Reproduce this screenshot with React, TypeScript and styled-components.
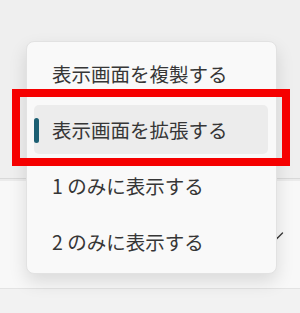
import styled, { createGlobalStyle } from "styled-components";

const GlobalStyle = createGlobalStyle`
  html, body {
    margin: 0;
    padding: 0;
    background: #efefef;
  }
  #root {
    width: 300px;
    height: 313px;
  }
`;

const items = [
  { label: "表示画面を複製する", selected: false },
  { label: "表示画面を拡張する", selected: true },
  { label: "1 のみに表示する", selected: false },
  { label: "2 のみに表示する", selected: false },
];

const App = () => {
  return (
    <Page>
      <GlobalStyle />
      <TopArea />
      <SettingsRow />
      <BottomArea />

      <Chevron width="14" height="10" viewBox="0 0 14 10">
        <polyline points="1.5,2 7,7.5 12.5,2" />
      </Chevron>

      <Menu>
        {items.map((item) => (
          <MenuItem key={item.label} $selected={item.selected}>
            {item.label}
          </MenuItem>
        ))}
      </Menu>

      {/* 注釈の赤枠 */}
      <Highlight />
    </Page>
  );
};

const Page = styled.div`
  position: relative;
  width: 300px;
  height: 313px;
  overflow: hidden;
  display: flex;
  flex-direction: column;
  font-family: "Noto Sans CJK JP", "Noto Sans", sans-serif;
`;

// 背景
const TopArea = styled.div`
  height: 178px;
  flex-shrink: 0;
  background: #efefef;
  border-bottom: 1px solid #d9d9d9;
`;

const SettingsRow = styled.div`
  height: 107px;
  flex-shrink: 0;
  background: #f8f8f8;
  border-top: 2px solid #ebebeb;
  border-bottom: 1px solid #e3e3e3;
`;

const BottomArea = styled.div`
  flex: 1;
  background: #f2f2f2;
`;

const Chevron = styled.svg`
  position: absolute;
  left: 270px;
  top: 231px;
  fill: none;
  stroke: #3a3a3a;
  stroke-width: 1.4;
  stroke-linecap: round;
  stroke-linejoin: round;
`;

// メニュー
const Menu = styled.div`
  position: absolute;
  left: 26px;
  top: 41px;
  width: 251px;
  box-sizing: border-box;
  display: flex;
  flex-direction: column;
  gap: 7px;
  padding: 7px 8px 7px 7px;
  background: #f9f9f9;
  border: 1px solid #e2e2e2;
  border-radius: 8px;
  box-shadow: 0 8px 18px rgba(0, 0, 0, 0.12);
`;

interface MenuItemProps {
  $selected: boolean;
}

const MenuItem = styled.div<MenuItemProps>`
  position: relative;
  height: 49px;
  display: flex;
  align-items: center;
  padding-left: 18px;
  border-radius: 5px;
  background: ${(props) => (props.$selected ? "#ececec" : "transparent")};
  color: #363636;
  font-size: 19.5px;
  line-height: 1;
  white-space: nowrap;

  &::before {
    content: "";
    display: ${(props) => (props.$selected ? "block" : "none")};
    position: absolute;
    left: 0;
    top: 13px;
    width: 5px;
    height: 25px;
    border-radius: 3px;
    background: #1c5f73;
  }
`;

const Highlight = styled.div`
  position: absolute;
  left: 12px;
  top: 89px;
  width: 278px;
  height: 77px;
  box-sizing: border-box;
  border: 8px solid #f50000;
  pointer-events: none;
`;

export default App;
